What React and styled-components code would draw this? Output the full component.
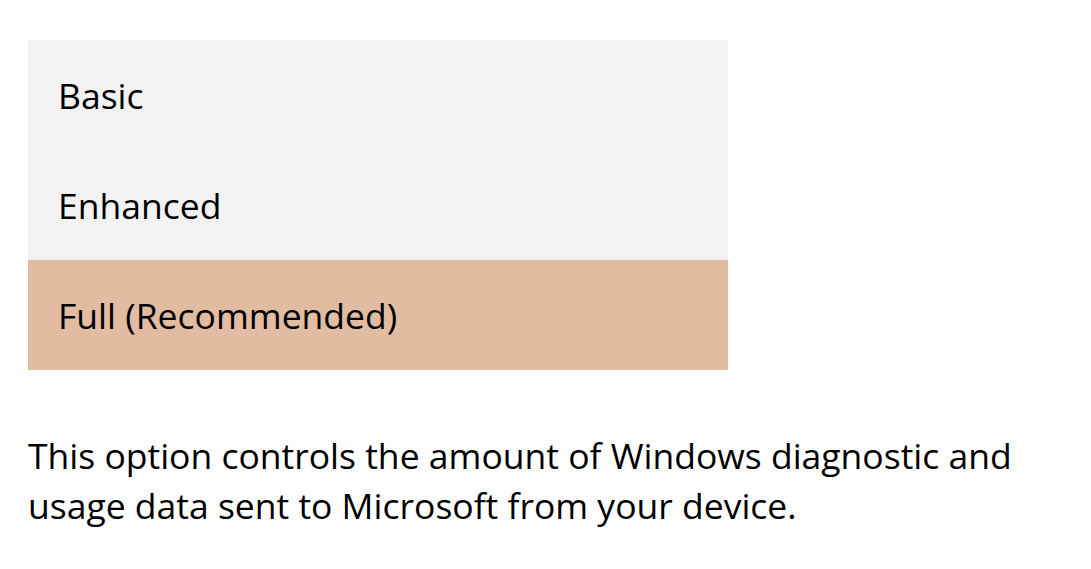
import React, { useState } from "react";
import styled, { createGlobalStyle } from "styled-components";

const GlobalStyle = createGlobalStyle`
  body {
    margin: 0;
    background: #ffffff;
    font-family: "Open Sans", "Noto Sans", sans-serif;
    color: #000000;
  }
`;

const Page = styled.div`
  padding: 40px 28px 0 28px;
`;

const OptionList = styled.div`
  width: 700px;
  display: flex;
  flex-direction: column;
  background: #f2f2f2;
`;

const Option = styled.div`
  height: 110px;
  display: flex;
  align-items: center;
  padding-left: 30px;
  font-size: 35.5px;
  background: ${(p) => (p.selected ? "#e1bca1" : "transparent")};
  cursor: pointer;
`;

const Description = styled.p`
  margin: 60px 0 0 0;
  font-size: 35.5px;
  line-height: 50px;
  width: 1010px;
`;

const OPTIONS = ["Basic", "Enhanced", "Full (Recommended)"];

const App = () => {
  const [selected, setSelected] = useState(2);

  return (
    <Page>
      <GlobalStyle />
      <OptionList>
        {OPTIONS.map((label, i) => (
          <Option key={label} selected={i === selected} onClick={() => setSelected(i)}>
            {label}
          </Option>
        ))}
      </OptionList>
      <Description>
        This option controls the amount of Windows diagnostic and usage data sent to
        Microsoft from your device.
      </Description>
    </Page>
  );
};

export default App;
